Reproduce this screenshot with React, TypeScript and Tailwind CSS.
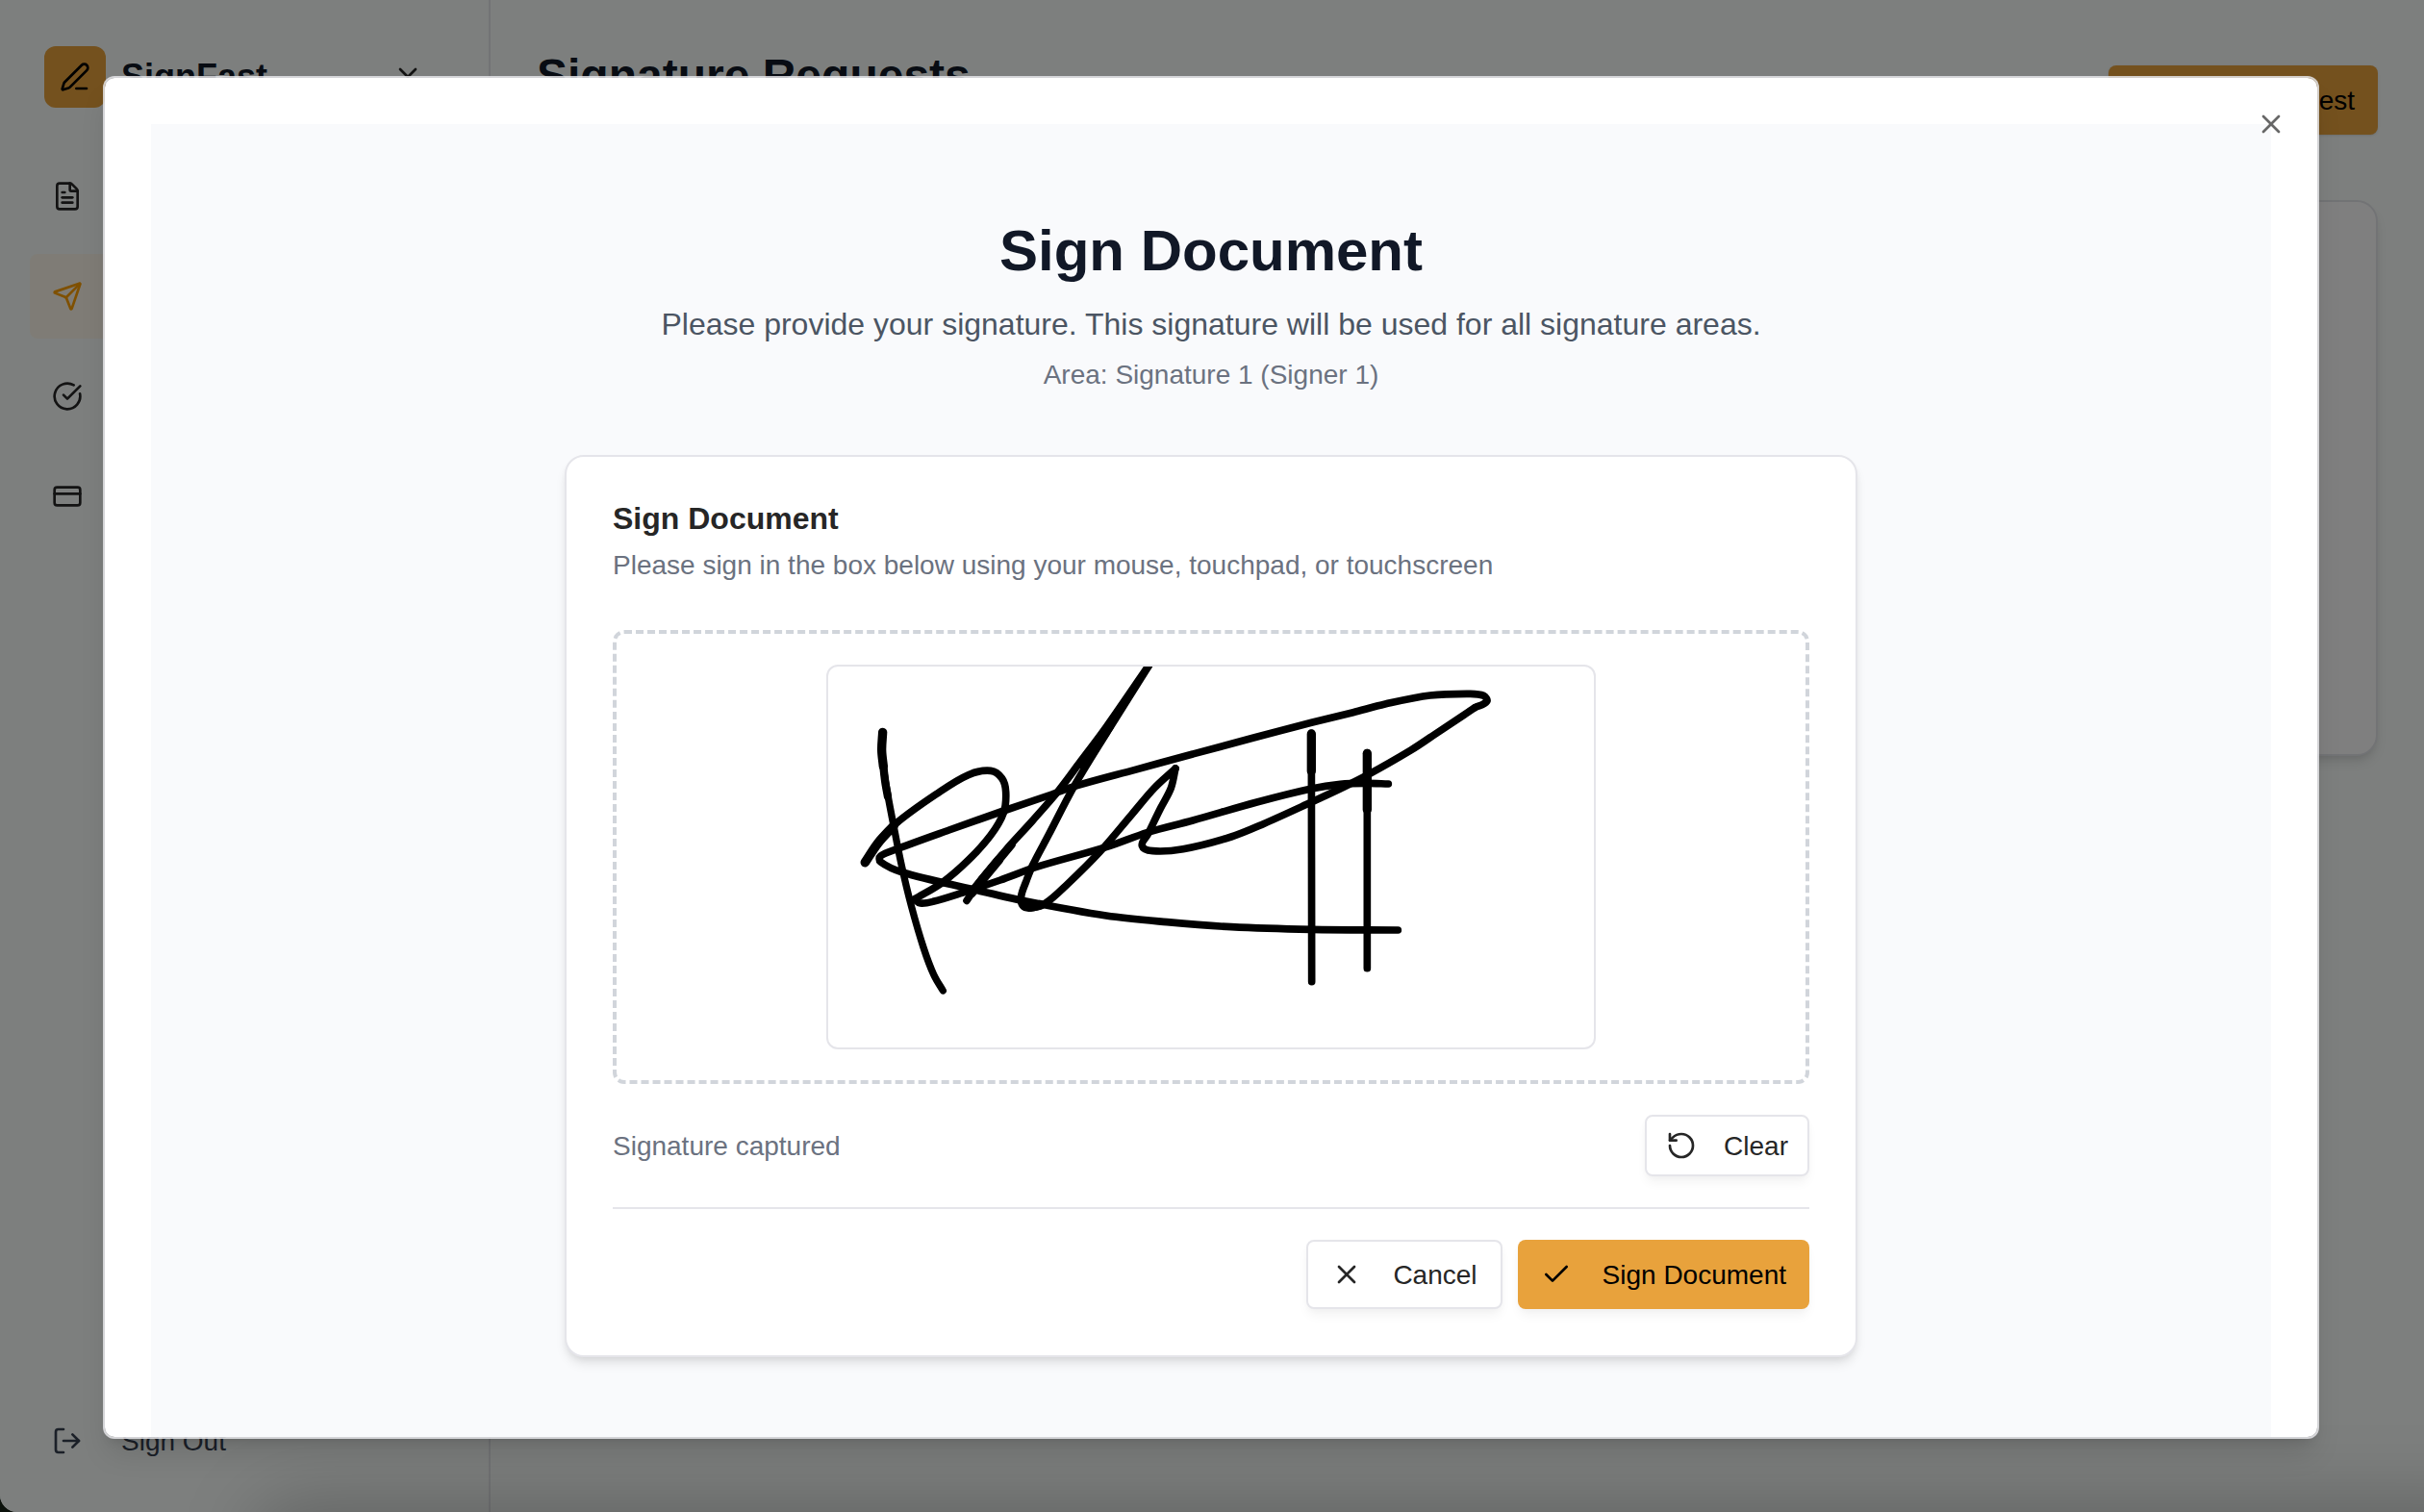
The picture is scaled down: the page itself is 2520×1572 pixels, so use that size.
import React from "react";
import {
  Check,
  ChevronDown,
  CircleCheckBig,
  CreditCard,
  FileText,
  LogOut,
  PenLine,
  Plus,
  RotateCcw,
  Send,
  X,
} from "lucide-react";

const navItems = [
  { icon: FileText, active: false },
  { icon: Send, active: true },
  { icon: CircleCheckBig, active: false },
  { icon: CreditCard, active: false },
];

function Sidebar() {
  return (
    <aside className="flex h-full w-[510px] shrink-0 flex-col border-r-2 border-[#e5e7eb] pl-[30px] pr-[30px]">
      <div className="mt-12 flex h-16 items-center pl-4 pr-[38px]">
        <div className="flex size-16 shrink-0 items-center justify-center rounded-xl bg-[#e8a23c] text-black">
          <PenLine size={32} />
        </div>
        <span className="ml-4 flex-1 text-[36px] font-bold leading-[56px] text-[#111827]">SignFast</span>
        <ChevronDown size={32} className="-mt-2 text-[#262626]" />
      </div>
      <nav className="mt-12 flex flex-col gap-4">
        {navItems.map(({ icon: Icon, active }, i) => (
          <div
            key={i}
            className={
              active
                ? "ml-px flex h-[88px] items-center rounded-lg bg-[#fff9ec] pl-[23px] pr-6"
                : "flex h-[88px] items-center rounded-lg px-6 text-[#262626]"
            }
          >
            <Icon size={32} className={active ? "text-[#ffa000]" : ""} />
          </div>
        ))}
      </nav>
      <div className="mb-[30px] mt-auto flex h-[88px] items-center px-6 text-[#374151]">
        <LogOut size={32} />
        <span className="ml-10 pt-0.5 text-[28px] leading-10">Sign Out</span>
      </div>
    </aside>
  );
}

function Page() {
  return (
    <div className="flex h-full w-full bg-[#fafefc]">
      <Sidebar />
      <main className="flex flex-1 flex-col p-12">
        <header className="flex h-28 items-start justify-between">
          <h1 className="text-[48px] font-bold leading-[62px] text-[#111827]">Signature Requests</h1>
          <button className="flex h-[72px] items-center gap-8 self-center rounded-lg bg-[#e8a23c] px-6 text-[28px] text-black shadow-sm">
            <Plus size={32} />
            <span className="pt-0.5">New Request</span>
          </button>
        </header>
        <section className="mt-12 h-[578px] rounded-[22px] border-2 border-[#e5e7eb] bg-white shadow-[0_8px_12px_-2px_rgba(0,0,0,0.1),0_4px_8px_-4px_rgba(0,0,0,0.1)]" />
      </main>
    </div>
  );
}

type Point = [number, number];

/** Joins the points of one pen stroke with a smooth cubic spline. */
function smoothPath(points: Point[]): string {
  let d = `M${points[0][0]} ${points[0][1]}`;
  for (let i = 0; i < points.length - 1; i++) {
    const p0 = points[Math.max(i - 1, 0)];
    const p1 = points[i];
    const p2 = points[i + 1];
    const p3 = points[Math.min(i + 2, points.length - 1)];
    const len = Math.hypot(p2[0] - p1[0], p2[1] - p1[1]);
    const control = (from: Point, to: Point, at: Point, dir: number): Point => {
      const dx = to[0] - from[0];
      const dy = to[1] - from[1];
      const span = Math.hypot(dx, dy) || 1;
      return [at[0] + (dir * dx * len) / (span * 3), at[1] + (dir * dy * len) / (span * 3)];
    };
    const c1 = control(p0, p2, p1, 1);
    const c2 = control(p1, p3, p2, -1);
    d += `C${c1[0].toFixed(1)} ${c1[1].toFixed(1)} ${c2[0].toFixed(1)} ${c2[1].toFixed(1)} ${p2[0]} ${p2[1]}`;
  }
  return d;
}

const strokes: { width: number; points: Point[] }[] = [
  {
    width: 22,
    points: [[172, 245], [171, 310], [182, 400], [208, 540], [232, 660], [262, 785], [300, 915], [332, 1000], [361, 1050]],
  },
  { width: 28, points: [[173, 244], [170, 300], [175, 350]] },
  { width: 25, points: [[175, 350], [181, 400], [189, 445]] },
  {
    width: 23,
    points: [
      [118, 650], [158, 590], [215, 528], [340, 437], [440, 377], [510, 364], [545, 388], [557, 430], [550, 495],
      [510, 565], [440, 643], [360, 712], [272, 765],
    ],
  },
  {
    width: 23,
    points: [
      [272, 765], [290, 777], [330, 772], [420, 745], [540, 705], [650, 665], [870, 602], [1000, 556], [1140, 519],
      [1340, 462], [1510, 420], [1600, 406], [1680, 403], [1750, 405],
    ],
  },
  { width: 29, points: [[118, 650], [158, 590], [207, 536]] },
  { width: 23, points: [[435, 769], [480, 704], [560, 608], [640, 520], [720, 428], [790, 335], [870, 228], [1012, 22]] },
  { width: 29, points: [[450, 745], [495, 690], [535, 642]] },
  { width: 26, points: [[535, 642], [575, 594]] },
  {
    width: 23,
    points: [
      [1012, 22], [870, 248], [770, 412], [690, 565], [640, 660], [620, 710], [605, 755], [610, 785], [635, 792], [680, 778],
      [750, 717], [850, 617], [950, 500], [1020, 418], [1086, 357],
    ],
  },
  { width: 28, points: [[880, 226], [800, 350]] },
  { width: 30, points: [[612, 778], [634, 788], [664, 782]] },
  {
    width: 23,
    points: [
      [1086, 357], [1072, 418], [1040, 480], [1000, 562], [982, 598], [1015, 614], [1110, 608], [1260, 570], [1360, 530],
      [1510, 462], [1600, 420], [1680, 380], [1820, 300], [1900, 247], [2020, 167],
    ],
  },
  {
    width: 23,
    points: [
      [2020, 167], [2057, 148], [2047, 130], [2005, 124], [1880, 129], [1740, 156], [1640, 182], [1510, 214], [1330, 261],
      [1140, 312], [960, 361], [780, 410], [700, 438], [550, 489], [380, 549], [220, 607], [166, 630], [166, 648], [235, 681], [450, 733],
      [620, 771], [870, 816], [1060, 836], [1260, 851], [1510, 859], [1780, 861],
    ],
  },
  { width: 23, points: [[1510, 247], [1511, 1022]] },
  { width: 28, points: [[1510, 249], [1510, 365]] },
  { width: 23, points: [[1684, 308], [1684, 980]] },
  { width: 28, points: [[1684, 310], [1684, 485]] },
];

function Signature() {
  return (
    <svg
      viewBox="3 39 2388 1188"
      className="h-full w-full"
      fill="none"
      stroke="#000"
      strokeLinecap="round"
      strokeLinejoin="round"
    >
      {strokes.map((stroke, i) => (
        <path key={i} d={smoothPath(stroke.points)} strokeWidth={stroke.width} />
      ))}
    </svg>
  );
}

function SignCard() {
  return (
    <div className="mt-[63px] w-[1344px] rounded-[20px] border-2 border-[#e5e5ea] bg-white p-12 shadow-[0_8px_12px_-2px_rgba(0,0,0,0.1),0_4px_8px_-4px_rgba(0,0,0,0.1)]">
      <h2 className="text-[32px] font-bold leading-8 text-[#262626]">Sign Document</h2>
      <p className="mt-[13px] text-[28px] leading-10 text-[#6b7280]">
        Please sign in the box below using your mouse, touchpad, or touchscreen
      </p>
      <div className="mt-[47px] flex justify-center rounded-xl border-4 border-dashed border-[#d1d5db] p-8">
        <div className="h-[400px] w-[800px] overflow-hidden rounded-xl border-2 border-[#e5e5ea]">
          <Signature />
        </div>
      </div>
      <div className="mt-8 flex items-center justify-between">
        <span className="pt-0.5 text-[28px] leading-10 text-[#6b7280]">Signature captured</span>
        <button className="flex h-16 items-center gap-7 rounded-lg border-2 border-[#e5e5ea] bg-white px-5 text-[28px] text-[#262626] shadow-[0_8px_12px_-2px_rgba(0,0,0,0.05),0_2px_6px_0_rgba(0,0,0,0.02)]">
          <RotateCcw size={32} />
          <span className="pt-0.5">Clear</span>
        </button>
      </div>
      <div className="mt-8 flex justify-end gap-4 border-t-2 border-[#e5e5ea] pt-8">
        <button className="flex h-[72px] items-center gap-8 rounded-lg border-2 border-[#e5e5ea] bg-white px-6 text-[28px] text-[#262626] shadow-[0_8px_12px_-2px_rgba(0,0,0,0.05),0_2px_6px_0_rgba(0,0,0,0.02)]">
          <X size={32} />
          <span className="pt-0.5">Cancel</span>
        </button>
        <button className="flex h-[72px] items-center gap-8 rounded-lg bg-[#e8a23c] px-6 text-[28px] text-black shadow-[0_8px_12px_-2px_rgba(0,0,0,0.05),0_2px_6px_0_rgba(0,0,0,0.02)]">
          <Check size={32} />
          <span className="pt-0.5">Sign Document</span>
        </button>
      </div>
    </div>
  );
}

function Modal() {
  return (
    <div className="relative h-[1417px] w-[2304px] overflow-hidden rounded-xl border-2 border-[#e4e4e7]/85 bg-white bg-clip-padding px-12 pt-12 shadow-[0_20px_30px_-6px_rgba(0,0,0,0.12),0_8px_12px_-8px_rgba(0,0,0,0.15)]">
      <div className="flex h-full flex-col items-center bg-[#f9fafc] pt-24">
        <h1 className="text-[60px] font-bold leading-[72px] text-[#111827]">Sign Document</h1>
        <p className="mt-4 text-[32px] leading-[48px] text-[#4b5563]">
          Please provide your signature. This signature will be used for all signature areas.
        </p>
        <p className="mt-[9px] text-[28px] leading-10 text-[#6b7280]">Area: Signature 1 (Signer 1)</p>
        <SignCard />
      </div>
      <button className="absolute right-8 top-8 text-[#676767]" aria-label="Close">
        <X size={32} />
      </button>
    </div>
  );
}

export default function App() {
  return (
    <div className="relative h-[1572px] w-[2520px] overflow-hidden bg-[#0c120c] font-['Liberation_Sans',Arial,sans-serif]">
      <div className="relative h-full w-full overflow-hidden rounded-bl-[18px]">
        <Page />
        <div className="absolute -bottom-24 -right-24 left-[260px] h-[110px] rounded-full bg-black/20 blur-[36px]" />
        <div className="absolute inset-0 flex items-center justify-center bg-black/50 pr-[2px] pt-[3px]">
          <Modal />
        </div>
      </div>
    </div>
  );
}
